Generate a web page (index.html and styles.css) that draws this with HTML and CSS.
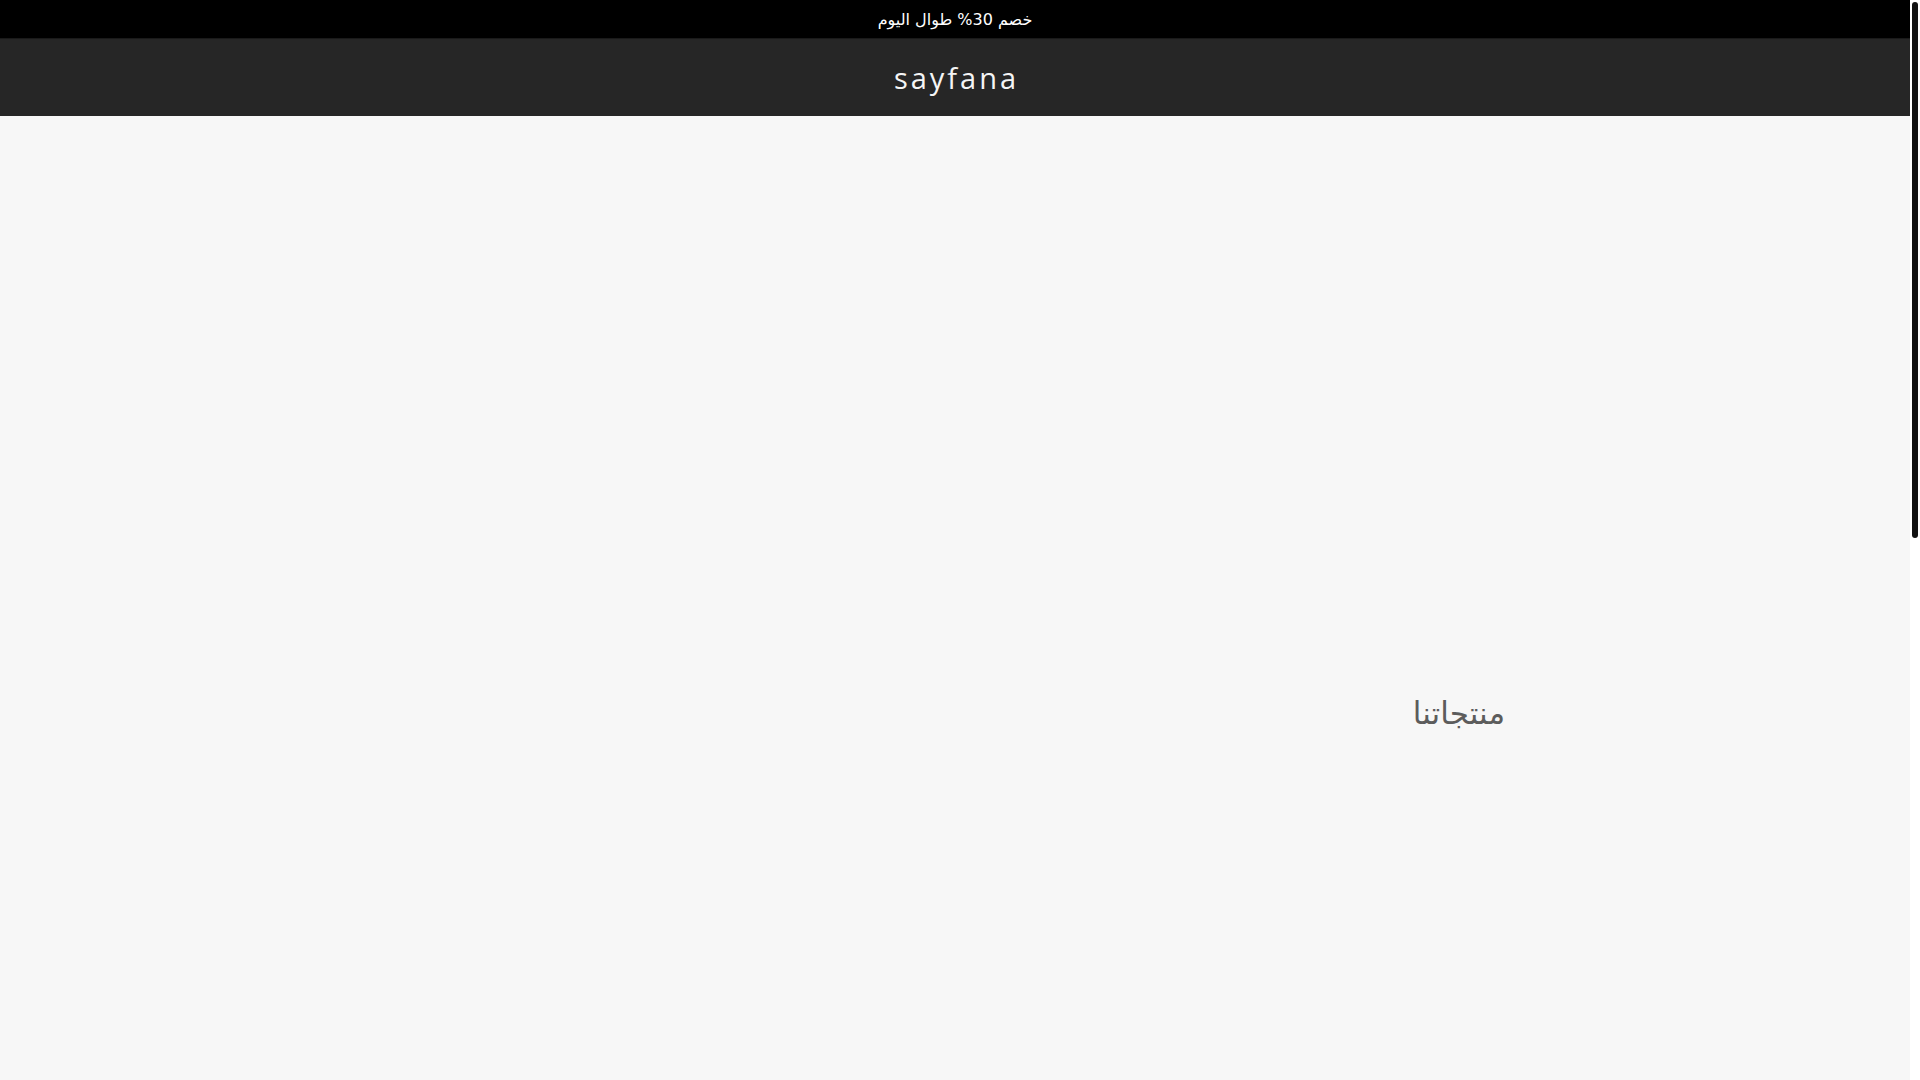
FILE: index.html
```html
<!DOCTYPE html>
<html lang="ar" dir="rtl">
<head>
<meta charset="utf-8">
<title>sayfana</title>
<link rel="stylesheet" href="styles.css">
</head>
<body>
<div class="viewport">
  <div class="page">
    <div class="announce">خصم 30% طوال اليوم</div>
    <header class="site-header">
      <div class="logo" dir="ltr">sayfana</div>
    </header>
    <main class="main">
      <section class="hero"></section>
      <section class="products">
        <div class="container">
          <h2 class="section-title">منتجاتنا</h2>
          <div class="grid"></div>
        </div>
      </section>
    </main>
  </div>
  <div class="scrollbar" aria-hidden="true">
    <div class="scrollbar-thumb"></div>
  </div>
</div>
</body>
</html>
```
FILE: styles.css
```css
html {
  height: 100%;
  overflow: hidden;
  background: #f7f7f7;
}
body {
  margin: 0;
  height: 100vh;
  overflow: hidden;
  background: #f7f7f7;
  font-family: "DejaVu Sans", sans-serif;
}
.viewport {
  display: flex;
  flex-direction: row;
  direction: ltr;
  height: 100vh;
}
.page {
  flex: 1;
  min-width: 0;
  overflow: hidden;
  direction: rtl;
}
.scrollbar {
  width: 10px;
  flex: none;
  background: #ffffff;
  padding: 2px;
  box-sizing: border-box;
}
.scrollbar-thumb {
  height: 536px;
  background: #111111;
  border-radius: 3px;
}
.announce {
  height: 39px;
  background: #000000;
  color: #ffffff;
  font-family: "DejaVu Sans", sans-serif;
  font-size: 16px;
  display: flex;
  align-items: center;
  justify-content: center;
  box-sizing: border-box;
  border-bottom: 1px solid #1a1a1a;
}
.site-header {
  height: 77px;
  background: #262626;
  display: flex;
  align-items: center;
  justify-content: center;
}
.logo {
  color: #f5f5f5;
  font-family: "Open Sans", sans-serif;
  font-weight: 500;
  font-size: 29px;
  letter-spacing: 3px;
  padding-left: 3px;
}
.main {
  background: #f7f7f7;
}
.hero {
  height: 574px;
}
.products {
  padding-bottom: 1368px;
}
.container {
  width: 1100px;
  margin: 0 auto;
}
.section-title {
  margin: 0;
  font-family: "Noto Sans", "DejaVu Sans", sans-serif;
  font-weight: 400;
  font-size: 31px;
  line-height: 44px;
  color: #5c5c5c;
  text-align: right;
}
.grid {
  height: 0;
}
```
